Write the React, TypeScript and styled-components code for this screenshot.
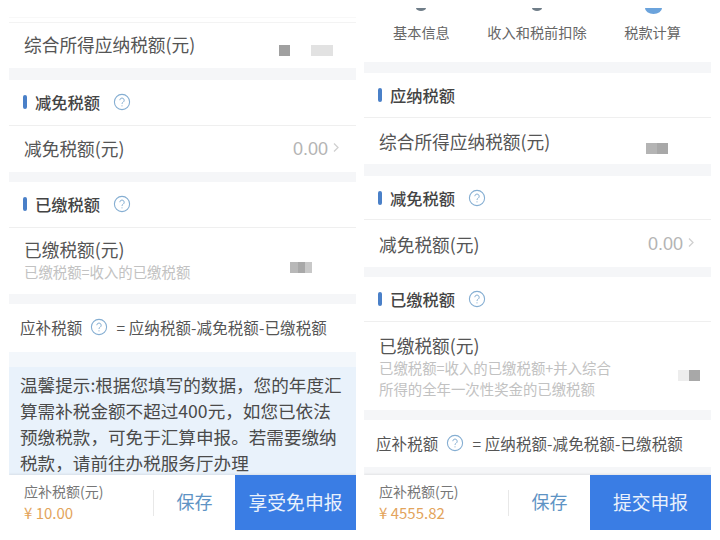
import React from "react";
import styled, { createGlobalStyle } from "styled-components";

const GlobalStyle = createGlobalStyle`
  html, body {
    margin: 0;
    padding: 0;
    background: #fff;
  }
  body {
    font-family: "Noto Sans CJK SC", "Liberation Sans", sans-serif;
    color: #444;
  }
`;

const Page = styled.div`
  width: 720px;
  height: 540px;
  overflow: hidden;
  display: flex;
  padding-left: 9px;
  gap: 8px;
  box-sizing: border-box;
  background: #fff;
`;

const Phone = styled.div`
  width: 347px;
  height: 530px;
  display: flex;
  flex-direction: column;
  position: relative;
  overflow: hidden;
`;

const TopBlank = styled.div`
  height: 23px;
  flex: none;
  box-sizing: border-box;
  padding-top: 17px;
  border-bottom: 1px solid #f3f3f3;
`;

const FaintLine = styled.div`
  height: 1px;
  background: #f8f8f8;
`;

const Steps = styled.div`
  height: 62px;
  flex: none;
  display: flex;
  padding: 0 30px 0 29px;
  justify-content: space-between;
`;

const Step = styled.div`
  display: flex;
  flex-direction: column;
  align-items: center;
  font-size: 14.2px;
  line-height: 20px;
  color: #666;
  padding-top: 22px;
  position: relative;
`;

const StepDot = styled.span<{ $active?: boolean }>`
  position: absolute;
  top: 8px;
  left: 50%;
  margin-left: ${({ $active }) => ($active ? "-8px" : "-5px")};
  width: ${({ $active }) => ($active ? "17px" : "10px")};
  height: ${({ $active }) => ($active ? "6px" : "3px")};
  border-radius: 0 0 50% 50% / 0 0 100% 100%;
  background: ${({ $active }) => ($active ? "#6ba3dc" : "#6f7d88")};
  filter: blur(0.5px);
`;

const Gap = styled.div<{ $h: number; $blue?: boolean }>`
  height: ${({ $h }) => $h}px;
  flex: none;
  background: ${({ $blue }) => ($blue ? "#f3f7fb" : "#f5f6f8")};
`;

const SectionHead = styled.div<{ $h: number; $lift?: boolean }>`
  height: ${({ $h }) => $h}px;
  flex: none;
  display: flex;
  align-items: center;
  padding: 0 0 ${({ $lift }) => ($lift ? "2px" : "0")} 14px;
  box-sizing: border-box;
  border-bottom: 1px solid #efefef;
`;

const Bar = styled.span`
  width: 4px;
  height: 14px;
  border-radius: 2px;
  background: #4a80c8;
  margin-right: 8px;
`;

const SectionTitle = styled.span`
  font-size: 16.3px;
  font-weight: 500;
  color: #444;
`;

const Help = styled.svg`
  width: 18px;
  height: 18px;
  flex: none;
`;

const HelpSlot = styled.span`
  display: flex;
  margin-left: 13px;
`;

const Row = styled.div<{ $h: number; $lift?: boolean }>`
  height: ${({ $h }) => $h}px;
  flex: none;
  display: flex;
  align-items: center;
  justify-content: space-between;
  padding: 0 16px ${({ $lift }) => ($lift ? "3px" : "0")} 15px;
  box-sizing: border-box;
  position: relative;
`;

const RowLabel = styled.div`
  font-size: 17.7px;
  line-height: 24px;
  color: #555;
`;

const RowNote = styled.div`
  font-size: 14.4px;
  line-height: 21px;
  color: #c2c2c2;
  white-space: nowrap;
`;

const RowValue = styled.div<{ $lift?: boolean }>`
  display: flex;
  align-items: center;
  margin-top: ${({ $lift }) => ($lift ? "3px" : "2px")};
  font-family: "Liberation Sans", sans-serif;
  font-size: 18px;
  color: #b4b4b4;
`;

const Chevron = styled.svg`
  width: 9px;
  height: 11px;
  margin-left: 4px;
  margin-right: -1px;
  margin-top: -4px;
`;

const Mosaic = styled.div`
  position: absolute;
  display: flex;
  filter: blur(0.5px);
`;

const Tile = styled.span<{ $w: number; $h: number; $c: string }>`
  display: block;
  width: ${({ $w }) => $w}px;
  height: ${({ $h }) => $h}px;
  background: ${({ $c }) => $c};
`;

const Formula = styled.div<{ $h: number; $x: number }>`
  height: ${({ $h }) => $h}px;
  flex: none;
  display: flex;
  align-items: center;
  padding: 0 0 2px ${({ $x }) => $x}px;
  font-size: 15.5px;
  letter-spacing: 0.1px;
  color: #555;
  white-space: nowrap;
  box-sizing: border-box;
`;

const FormulaSlot = styled.span`
  display: flex;
  margin: 0 8px 0 8px;
`;

const Tip = styled.div`
  flex: 1;
  min-height: 0;
  background: #e9f2fb;
  padding: 5px 0 0 11px;
  font-size: 17.6px;
  line-height: 26px;
  color: #4a4a4a;
  white-space: nowrap;
  overflow: hidden;
`;

const Spacer = styled.div`
  flex: 1;
  min-height: 0;
  background: #f5f6f8;
`;

const BottomBar = styled.div`
  height: 55px;
  flex: none;
  display: flex;
  align-items: center;
  background: #fff;
  box-shadow: 0 -1px 2px rgba(0, 0, 0, 0.08);
`;

const Amount = styled.div`
  width: 144px;
  padding: 0 0 1px 15px;
  box-sizing: border-box;
  flex: none;
`;

const AmountLabel = styled.div`
  font-size: 14px;
  line-height: 21px;
  color: #777;
`;

const AmountValue = styled.div`
  font-size: 15px;
  line-height: 21px;
  color: #e3a45c;
`;

const Divider = styled.span`
  width: 1px;
  height: 26px;
  background: #e8e8e8;
  flex: none;
`;

const SaveButton = styled.div`
  flex: 1;
  padding-bottom: 3px;
  text-align: center;
  font-size: 18px;
  color: #5e93c4;
`;

const SubmitButton = styled.div`
  width: 121px;
  height: 55px;
  flex: none;
  display: flex;
  align-items: center;
  justify-content: center;
  box-sizing: border-box;
  padding-bottom: 3px;
  background: #3a7de4;
  color: #e9f1fc;
  font-size: 18.8px;
`;

const HelpIcon = () => (
  <Help viewBox="0 0 18 18">
    <circle cx="9" cy="9" r="7.6" fill="none" stroke="#85aed2" strokeWidth="1.1" />
    <path
      d="M6.8 7.2a2.2 2.2 0 1 1 3.4 1.9c-.8.5-1.2.9-1.2 1.8"
      fill="none"
      stroke="#85aed2"
      strokeWidth="1"
    />
    <circle cx="9" cy="12.8" r=".6" fill="#85aed2" />
  </Help>
);

const Head = ({
  title,
  h,
  help = true,
  lift,
}: {
  title: string;
  h: number;
  help?: boolean;
  lift?: boolean;
}) => (
  <SectionHead $h={h} $lift={lift}>
    <Bar />
    <SectionTitle>{title}</SectionTitle>
    {help && (
      <HelpSlot>
        <HelpIcon />
      </HelpSlot>
    )}
  </SectionHead>
);

const ZeroValue = ({ lift }: { lift?: boolean }) => (
  <RowValue $lift={lift}>
    0.00
    <Chevron viewBox="0 0 9 11">
      <path d="M2 1.5 6 5.5 2 9.5" fill="none" stroke="#d0d0d0" strokeWidth="1.3" />
    </Chevron>
  </RowValue>
);

const FormulaLine = ({ x, h }: { x: number; h: number }) => (
  <Formula $x={x} $h={h}>
    应补税额
    <FormulaSlot>
      <HelpIcon />
    </FormulaSlot>
    = 应纳税额-减免税额-已缴税额
  </Formula>
);

const Footer = ({ amount, action }: { amount: string; action: string }) => (
  <BottomBar>
    <Amount>
      <AmountLabel>应补税额(元)</AmountLabel>
      <AmountValue>{amount}</AmountValue>
    </Amount>
    <Divider />
    <SaveButton>保存</SaveButton>
    <SubmitButton>{action}</SubmitButton>
  </BottomBar>
);

const App = () => (
  <Page>
    <GlobalStyle />
    <Phone>
      <TopBlank>
        <FaintLine />
      </TopBlank>
      <Row $h={45} $lift>
        <RowLabel>综合所得应纳税额(元)</RowLabel>
        <Mosaic style={{ left: 270, top: 22 }}>
          <Tile $w={11} $h={11} $c="#a0a0a0" />
          <Tile $w={21} $h={11} $c="#fff" />
          <Tile $w={22} $h={11} $c="#e2e2e2" />
        </Mosaic>
      </Row>
      <Gap $h={12} />
      <Head title="减免税额" h={46} lift />
      <Row $h={46} $lift>
        <RowLabel>减免税额(元)</RowLabel>
        <ZeroValue lift />
      </Row>
      <Gap $h={10} />
      <Head title="已缴税额" h={46} lift />
      <Row $h={66} $lift>
        <div>
          <RowLabel>已缴税额(元)</RowLabel>
          <RowNote>已缴税额=收入的已缴税额</RowNote>
        </div>
        <Mosaic style={{ left: 281, top: 34 }}>
          <Tile $w={8} $h={11} $c="#b8b8b8" />
          <Tile $w={7} $h={11} $c="#a8a8a8" />
          <Tile $w={7} $h={11} $c="#c8c8c8" />
        </Mosaic>
      </Row>
      <Gap $h={10} />
      <FormulaLine x={11} h={48} />
      <Gap $h={15} $blue />
      <Tip>
        温馨提示:根据您填写的数据，您的年度汇
        <br />
        算需补税金额不超过400元，如您已依法
        <br />
        预缴税款，可免于汇算申报。若需要缴纳
        <br />
        税款，请前往办税服务厅办理
      </Tip>
      <Footer amount="¥ 10.00" action="享受免申报" />
    </Phone>
    <Phone>
      <Steps>
        <Step>
          <StepDot />
          基本信息
        </Step>
        <Step>
          <StepDot />
          收入和税前扣除
        </Step>
        <Step>
          <StepDot $active />
          税款计算
        </Step>
      </Steps>
      <Gap $h={11} />
      <Head title="应纳税额" h={45} help={false} />
      <Row $h={46}>
        <RowLabel>综合所得应纳税额(元)</RowLabel>
        <Mosaic style={{ left: 282, top: 25 }}>
          <Tile $w={11} $h={11} $c="#b4b4b4" />
          <Tile $w={11} $h={11} $c="#a8a8a8" />
        </Mosaic>
      </Row>
      <Gap $h={12} />
      <Head title="减免税额" h={44} />
      <Row $h={47}>
        <RowLabel>减免税额(元)</RowLabel>
        <ZeroValue />
      </Row>
      <Gap $h={10} />
      <Head title="已缴税额" h={45} />
      <Row $h={88}>
        <div>
          <RowLabel>已缴税额(元)</RowLabel>
          <RowNote>
            已缴税额=收入的已缴税额+并入综合
            <br />
            所得的全年一次性奖金的已缴税额
          </RowNote>
        </div>
        <Mosaic style={{ left: 314, top: 48 }}>
          <Tile $w={11} $h={11} $c="#ededed" />
          <Tile $w={11} $h={11} $c="#a8a8a8" />
        </Mosaic>
      </Row>
      <Gap $h={10} />
      <FormulaLine x={12} h={47} />
      <Spacer />
      <Footer amount="¥ 4555.82" action="提交申报" />
    </Phone>
  </Page>
);

export default App;
